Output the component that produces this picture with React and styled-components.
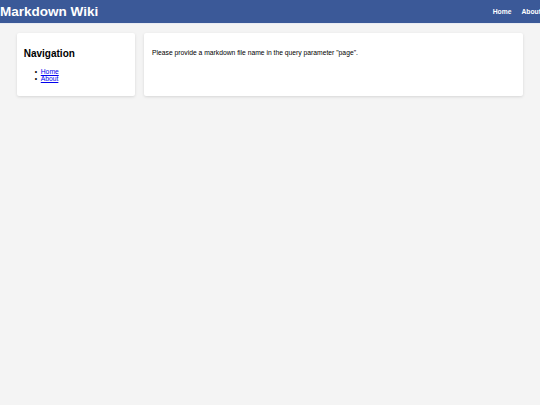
import styled, { createGlobalStyle } from "styled-components";

const GlobalStyle = createGlobalStyle`
  html, body {
    margin: 0;
    padding: 0;
    background: #f4f4f4;
    font-family: "Liberation Sans", Arial, sans-serif;
  }
`;

function App() {
  return (
    <>
      <GlobalStyle />
      <Header>
        <Title>Markdown Wiki</Title>
        <TopNav>
          <TopLink href="#">Home</TopLink>
          <TopLink href="#">About</TopLink>
        </TopNav>
      </Header>
      <Container>
        <Sidebar>
          <SideTitle>Navigation</SideTitle>
          <NavList>
            <NavItem>
              <a href="#">Home</a>
            </NavItem>
            <NavItem>
              <a href="#">About</a>
            </NavItem>
          </NavList>
        </Sidebar>
        <Content>
          <Message>
            Please provide a markdown file name in the query parameter "page".
          </Message>
        </Content>
      </Container>
    </>
  );
}

const Header = styled.header`
  height: 24px;
  background: #3b5998;
  display: flex;
  align-items: center;
  justify-content: space-between;
  border-bottom: 1px solid #e8ebf2;
  box-sizing: border-box;
  overflow: hidden;
`;

const Title = styled.h1`
  margin: 0;
  font-size: 13.5px;
  font-weight: bold;
  color: #fff;
`;

const TopNav = styled.nav`
  display: flex;
  gap: 10px;
  margin-right: -1px;
`;

const TopLink = styled.a`
  color: #fff;
  text-decoration: none;
  font-weight: bold;
  font-size: 6.75px;
`;

const Container = styled.main`
  display: flex;
  gap: 9px;
  padding: 9px 17px;
`;

const Card = styled.section`
  background: #fff;
  border-radius: 2px;
  box-shadow: 0 1px 3px rgba(0, 0, 0, 0.12);
`;

const Sidebar = styled(Card)`
  width: 118px;
  padding: 6.75px;
  box-sizing: border-box;
  flex-shrink: 0;
`;

const SideTitle = styled.h2`
  margin: 8px 0 9px;
  font-size: 10px;
  color: #000;
`;

const NavList = styled.ul`
  margin: 9px 0 7.5px;
  padding-left: 17px;
  list-style: none;
  font-size: 6.75px;
  line-height: 7px;

  a {
    color: #0000ee;
  }
`;

const NavItem = styled.li`
  &::before {
    content: "•";
    display: inline-block;
    width: 6px;
    margin-left: -6px;
    color: #000;
  }
`;

const Content = styled(Card)`
  flex: 1;
  padding: 9px 8px 8px;
`;

const Message = styled.p`
  margin: 6.75px 0;
  font-size: 6.75px;
  color: #000;
`;

export default App;
